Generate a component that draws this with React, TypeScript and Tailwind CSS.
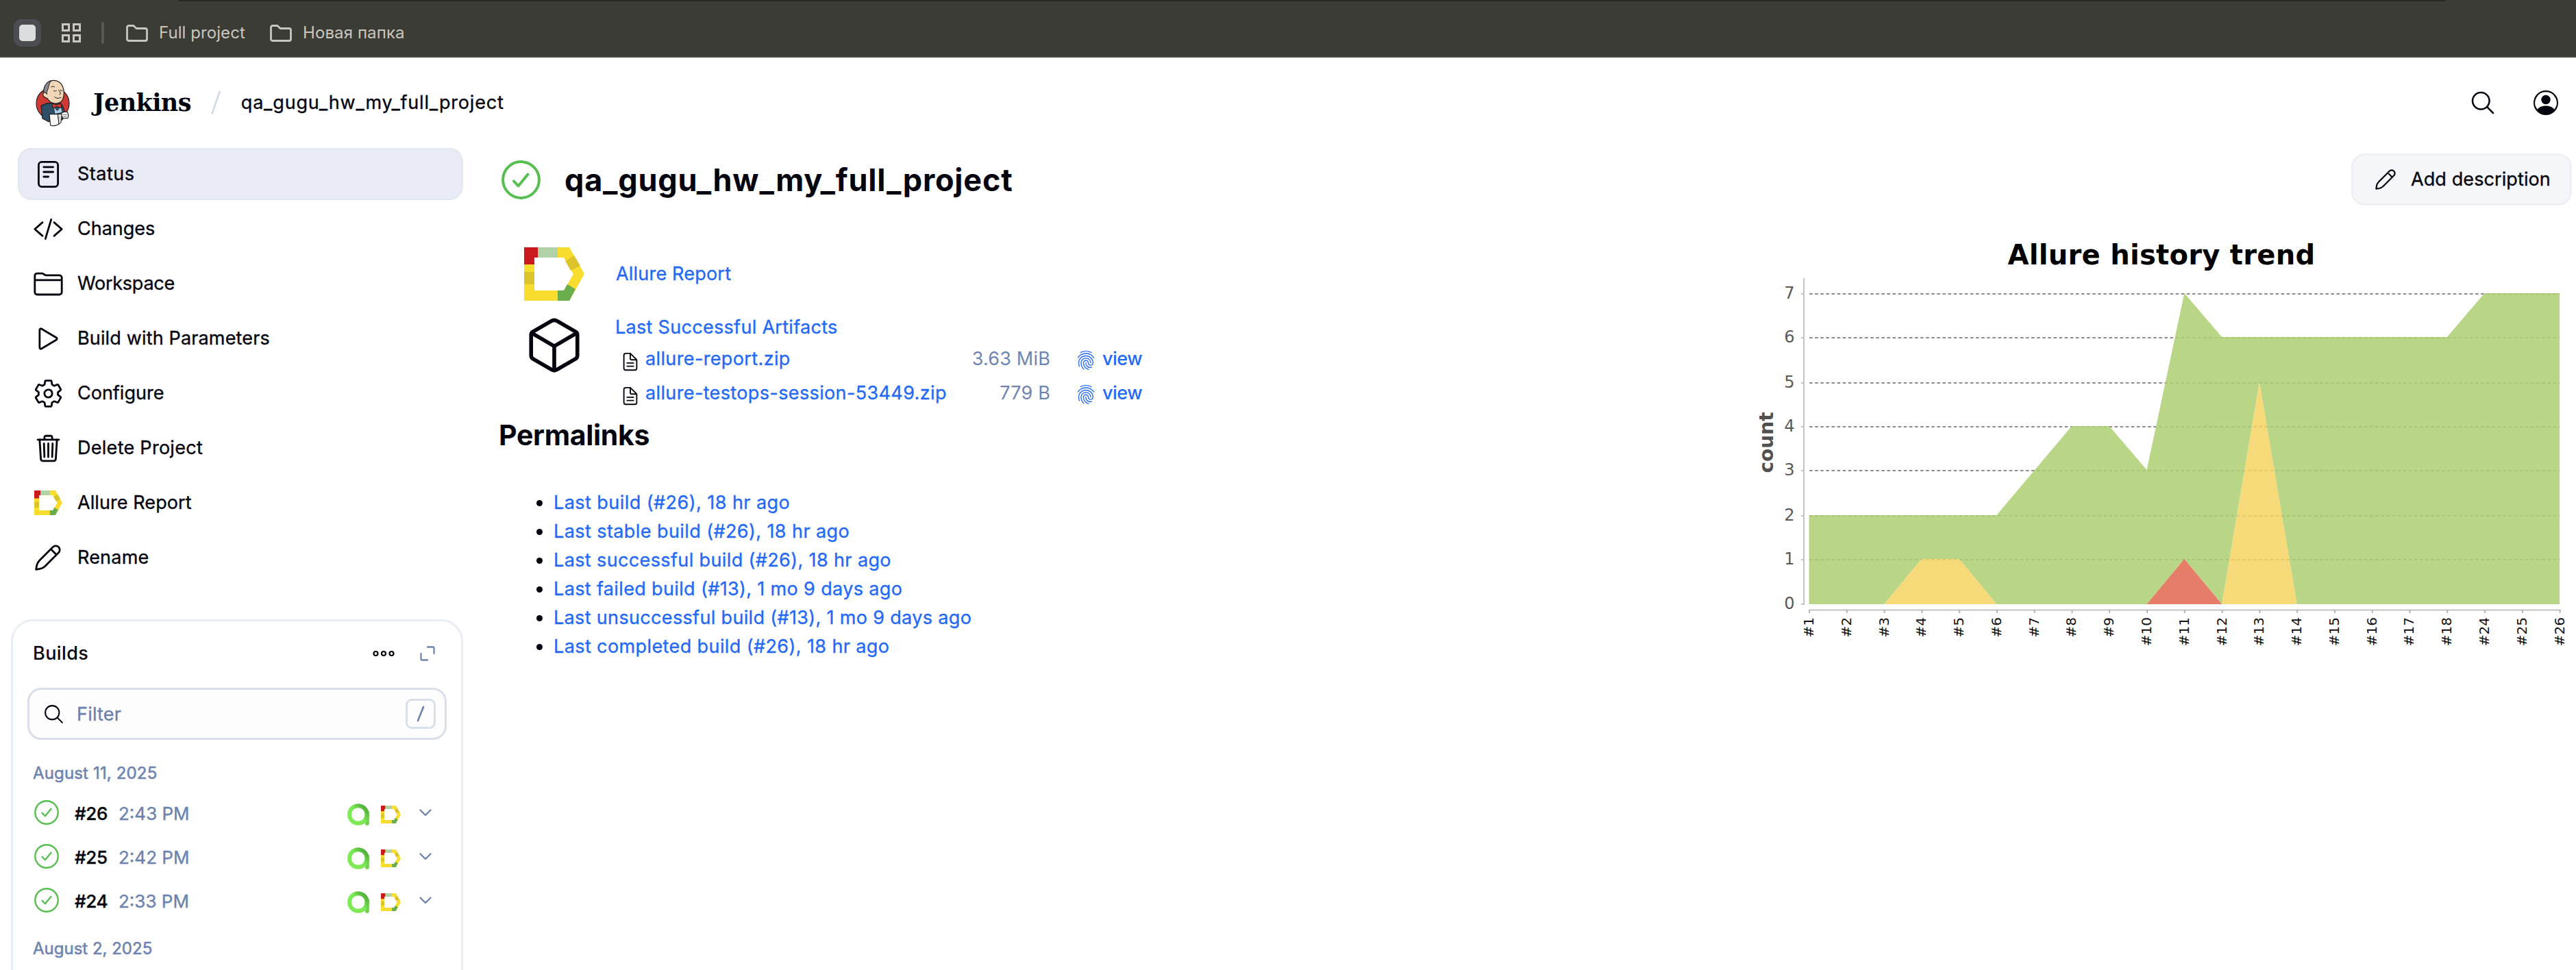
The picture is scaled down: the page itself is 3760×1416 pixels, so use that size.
import type { ReactNode } from "react";
import {
  IoCodeSlashOutline,
  IoCubeOutline,
  IoDocumentTextOutline,
  IoFingerPrintOutline,
  IoFolderOutline,
  IoPlayOutline,
  IoSearchOutline,
  IoSettingsOutline,
  IoTrashOutline,
} from "react-icons/io5";
import { BsPersonCircle } from "react-icons/bs";

function AllureLogo({ className }: { className: string }) {
  return (
    <svg viewBox="0 0 88 78" className={className} preserveAspectRatio="none">
      <path d="M0 0H66L88 39L66 78H0ZM15 15V63H58L72 39L58 15Z" fill="#f9dd2e" fillRule="evenodd" />
      <path d="M0 0H20V15H15V25H0Z" fill="#cb1a1e" />
      <path d="M20 0H49V15H20Z" fill="#b1d1a8" />
      <path d="M73 12L82 27L68 34L60 20Z" fill="#dbc32b" />
      <path d="M0 36H15V54H0Z" fill="#dbc32b" />
      <path d="M63 54L75 61L66 78H49V63H58Z" fill="#69ad4c" />
    </svg>
  );
}

function QaLogo() {
  return (
    <svg viewBox="0 0 32 32" className="mt-[6px] size-8">
      <defs>
        <linearGradient id="ring" x1="0" y1="1" x2="1" y2="0.1">
          <stop offset="0.55" stopColor="#7ce955" />
          <stop offset="1" stopColor="#4aa836" />
        </linearGradient>
      </defs>
      <path d="M28.8 13V29" stroke="#6ed24b" strokeWidth="6" strokeLinecap="round" />
      <circle cx="15.8" cy="16" r="12.8" fill="none" stroke="url(#ring)" strokeWidth="6" />
    </svg>
  );
}

function Pencil({ className }: { className: string }) {
  return (
    <svg viewBox="0 0 30 30" className={className} fill="none" stroke="currentColor" strokeWidth="2.2" strokeLinejoin="round">
      <path d="M1.3 28.7L2 24.3Q2.7 20.8 5 18.5L20.7 2.8A4.4 4.4 0 0 1 27.2 9.3L11.5 25Q9.2 27.3 5.7 28ZM18.3 5.2L24.8 11.7" />
    </svg>
  );
}

function StatusIcon() {
  return (
    <svg viewBox="0 0 31 39" className="h-[39px] w-[31px]" fill="none" stroke="currentColor" strokeWidth="2.8" strokeLinecap="round">
      <rect x="1.4" y="1.4" width="28.2" height="36.2" rx="4.5" />
      <path d="M8.8 8.8H22.6M8.8 16H22.6M8.8 23H15.6" />
    </svg>
  );
}

function Mascot() {
  return (
    <svg viewBox="67 45 150 207" className="h-[69px] w-[50px]" stroke="#231f20" strokeWidth="3.6" strokeLinejoin="round" strokeLinecap="round">
      <ellipse cx="142" cy="150" rx="72" ry="70" fill="#cf3a35" />
      <path d="M91 160L118 149L178 150L190 172L194 190L184 222L124 230L97 216Z" fill="#2f4f66" />
      <path d="M146 164L162 182L178 162L184 190L152 196Z" fill="#a9cfe6" strokeWidth="2" />
      <path d="M104 100C100 76 116 54 138 50C160 46 180 58 187 80C192 96 192 112 188 126C184 142 170 150 156 150C140 151 126 142 118 128C106 126 96 116 100 106Z" fill="#efd7b8" />
      <path d="M103 102C100 76 114 56 136 50C128 58 124 72 122 84L116 100L117 110C112 102 106 102 103 102Z" fill="#8a8a8c" strokeWidth="3" />
      <path d="M135 78Q142 70 150 78M146 94Q152 99 158 95M174 91Q178 96 184 94M168 92Q182 108 172 112M150 122Q162 132 178 124" fill="none" strokeWidth="3" />
      <path d="M140 150L157 156L178 150L180 170L160 164L142 170Z" fill="#d33833" strokeWidth="3" />
      <path d="M180 192Q194 184 206 188Q214 200 208 214L188 216Q178 206 180 192Z" fill="#fff" />
      <path d="M188 200H204M188 208H202" strokeWidth="2" />
      <path d="M127 197H165L170 240Q150 252 132 246Z" fill="#f7f7f7" />
      <path d="M165 197L182 196L178 234L170 240Z" fill="#dcd9d8" strokeWidth="3" />
    </svg>
  );
}

function BookmarkFolder() {
  return (
    <svg viewBox="0 0 32 25" className="h-[25px] w-8" fill="none" stroke="#c9c6bf" strokeWidth="2.8" strokeLinejoin="round">
      <path d="M1.5 21V4Q1.5 1.5 4 1.5H11L15 5.5H28Q30.5 5.5 30.5 8V21Q30.5 23.5 28 23.5H4Q1.5 23.5 1.5 21Z" />
    </svg>
  );
}

const icon = "size-[45px]";

const menu: { label: string; node: ReactNode; tracking: string }[] = [
  { label: "Status", node: <StatusIcon />, tracking: "tracking-[0.5px]" },
  { label: "Changes", node: <IoCodeSlashOutline className={icon} />, tracking: "tracking-[0px]" },
  { label: "Workspace", node: <IoFolderOutline className={icon} />, tracking: "tracking-[-0.25px]" },
  { label: "Build with Parameters", node: <IoPlayOutline className={icon} />, tracking: "tracking-[0.15px]" },
  { label: "Configure", node: <IoSettingsOutline className={icon} />, tracking: "tracking-[0px]" },
  { label: "Delete Project", node: <IoTrashOutline className={icon} />, tracking: "tracking-[0.28px]" },
  { label: "Allure Report", node: <AllureLogo className="h-9 w-[41px]" />, tracking: "tracking-[0.08px]" },
  { label: "Rename", node: <Pencil className="size-[38px]" />, tracking: "tracking-[0.2px]" },
];

const builds = [
  { id: "#26", time: "2:43 PM" },
  { id: "#25", time: "2:42 PM" },
  { id: "#24", time: "2:33 PM" },
];

const artifacts = [
  { name: "allure-report.zip", size: "3.63 MiB" },
  { name: "allure-testops-session-53449.zip", size: "779 B" },
];

const permalinks = [
  { text: "Last build (#26), 18 hr ago", tracking: "tracking-[0.45px]" },
  { text: "Last stable build (#26), 18 hr ago", tracking: "tracking-[0.42px]" },
  { text: "Last successful build (#26), 18 hr ago", tracking: "tracking-[0.38px]" },
  { text: "Last failed build (#13), 1 mo 9 days ago", tracking: "tracking-[0.36px]" },
  { text: "Last unsuccessful build (#13), 1 mo 9 days ago", tracking: "tracking-[0.34px]" },
  { text: "Last completed build (#26), 18 hr ago", tracking: "tracking-[0.4px]" },
];

const ticks = ["#1", "#2", "#3", "#4", "#5", "#6", "#7", "#8", "#9", "#10", "#11", "#12", "#13", "#14", "#15", "#16", "#17", "#18", "#24", "#25", "#26"];
const gridY = [882, 817, 753, 687, 623, 559, 493, 429];

function TrendChart() {
  const x = (i: number) => 2640.5 + i * 54.78;
  const pt = ([i, v]: number[]) => `${x(i).toFixed(1)},${gridY[v] - (v ? 1 : 0)}`;
  const area = (points: number[][]) => points.map(pt).join(" ");
  return (
    <svg viewBox="2540 320 1220 640" className="h-[640px] w-[1220px] font-['DejaVu_Sans'] [-webkit-text-stroke:0]">
      <text x="3155" y="386" textAnchor="middle" fontSize="40" fontWeight="700" letterSpacing="0.29" fill="#000">
        Allure history trend
      </text>
      <text transform="translate(2588 646) rotate(-90)" textAnchor="middle" fontSize="28" fontWeight="700" fill="#505050">
        count
      </text>
      {gridY.map((y, v) => (
        <g key={v}>
          {v > 0 && <path d={`M2641 ${y}H3736`} stroke="#8c8c8c" strokeWidth="2" strokeDasharray="4.6 3.5" />}
          <path d={`M2629 ${y}H2634`} stroke="#c4c4c4" strokeWidth="2" />
          <text x="2619.5" y={y + 7} textAnchor="end" fontSize="24" fill="#595959">
            {v}
          </text>
        </g>
      ))}
      <polygon
        fill="#abcf70"
        fillOpacity="0.85"
        points={area([
          [0, 0], [0, 2], [5, 2], [7, 4], [8, 4], [9, 3], [10, 7], [11, 6], [17, 6], [18, 7], [20, 7], [20, 0],
          [13, 0], [12, 5], [11, 0], [10, 1], [9, 0], [5, 0], [4, 1], [3, 1], [2, 0],
        ])}
      />
      <polygon fill="#f5d363" fillOpacity="0.85" points={area([[2, 0], [3, 1], [4, 1], [5, 0]])} />
      <polygon fill="#f5d363" fillOpacity="0.85" points={area([[11, 0], [12, 5], [13, 0]])} />
      <polygon fill="#e2664e" fillOpacity="0.85" points={area([[9, 0], [10, 1], [11, 0]])} />
      <path d="M2633 406V883M2641 890.5H3738" stroke="#c4c4c4" strokeWidth="2" fill="none" />
      {ticks.map((t, i) => (
        <g key={t}>
          <path d={`M${x(i) + 0.5} 890V895`} stroke="#b4b4b4" strokeWidth="2" />
          <text transform={`translate(${x(i) + 6.5} 901) rotate(-90)`} textAnchor="end" fontSize="20" fill="#111">
            {t}
          </text>
        </g>
      ))}
    </svg>
  );
}

export default function App() {
  return (
    <div className="flex h-[1416px] w-[3760px] flex-col overflow-hidden bg-white font-[Inter,sans-serif] text-[27px] font-normal text-[#04040f] [-webkit-text-stroke:0.35px]">
      {/* Bookmarks bar */}
      <div className="flex h-[84px] shrink-0 flex-col border-b-2 border-[#4a4a48] bg-[#3b3c36]">
        <div className="ml-[260px] h-[2px] w-[3310px] shrink-0 rounded-b bg-[#262822]" />
        <div className="flex h-20 items-center pt-3 pl-5 text-[24px] text-[#c9c6bf] [-webkit-text-stroke:0]">
          <div className="flex size-10 items-center justify-center rounded-[11px] bg-[#4c4d50]">
            <div className="size-6 rounded-[5px] bg-[#dcdde1]" />
          </div>
          <div className="ml-[30px] grid grid-cols-2 gap-1">
            <div className="size-3 border-3 border-[#c9c6bf]" />
            <div className="size-3 border-3 border-[#c9c6bf]" />
            <div className="size-3 border-3 border-[#c9c6bf]" />
            <div className="size-3 border-3 border-[#c9c6bf]" />
          </div>
          <div className="mr-8 ml-[30px] h-8 w-1 rounded bg-[#585953]" />
          <BookmarkFolder />
          <span className="ml-4 w-[162px] tracking-[0.07px]">Full project</span>
          <BookmarkFolder />
          <span className="ml-4 tracking-[0.1px]">Новая папка</span>
        </div>
      </div>

      {/* Page header */}
      <header className="flex h-[132px] shrink-0 items-center pr-[26px] pl-[52px]">
        <Mascot />
        <span className="ml-[34px] font-['DejaVu_Serif'] text-[35px] font-bold tracking-[-0.6px] [-webkit-text-stroke:0]">Jenkins</span>
        <svg viewBox="0 0 14 36" className="ml-[29px] h-9 w-[14px]">
          <path d="M12.5 2L1.5 34" stroke="#d0d9e8" strokeWidth="2.6" strokeLinecap="round" />
        </svg>
        <span className="ml-[30px] pt-px tracking-[0.82px]">qa_gugu_hw_my_full_project</span>
        <IoSearchOutline className="ml-auto size-10" />
        <BsPersonCircle className="ml-[54px] size-9" />
      </header>

      <div className="flex">
        {/* Sidebar */}
        <aside className="flex w-[676px] shrink-0 flex-col">
          <nav className="flex flex-col gap-1 pl-[26px]">
            {menu.map((m, i) => (
              <a
                key={m.label}
                className={`flex h-[76px] items-center rounded-[20px] border-2 pl-[19px] ${i === 0 ? "border-[#e3e7f0] bg-[#e8ebf4]" : "border-transparent"}`}
              >
                <span className="flex w-[46px] justify-center">{m.node}</span>
                <span className={`ml-5 pt-px ${m.tracking}`}>{m.label}</span>
              </a>
            ))}
          </nav>

          <section className="mt-[52px] ml-4 h-[540px] rounded-[32px] border-3 border-[#e9edf4] px-[21px]">
            <div className="flex h-[93px] items-center pr-[17px] pl-2">
              <span className="pt-[2px] font-medium tracking-[0.4px] [-webkit-text-stroke:0]">Builds</span>
              <svg viewBox="0 0 32 10" className="ml-auto h-[10px] w-8" fill="none" stroke="currentColor" strokeWidth="2.2">
                <circle cx="4.5" cy="5" r="3" />
                <circle cx="16" cy="5" r="3" />
                <circle cx="27.5" cy="5" r="3" />
              </svg>
              <svg viewBox="0 0 22 22" className="ml-[37px] size-[22px]" fill="none" stroke="#6f84b0" strokeWidth="2.3" strokeLinecap="round" strokeLinejoin="round">
                <path d="M11 1.5H19Q20.5 1.5 20.5 3V11M1.5 11V19Q1.5 20.5 3 20.5H11" />
              </svg>
            </div>
            <div className="mt-1 flex h-[76px] items-center rounded-[20px] border-3 border-[#d9deea] bg-[#fdfdfe] pr-[13px] pl-[19px]">
              <IoSearchOutline className="size-[33px]" />
              <span className="ml-[17px] pt-[2px] tracking-[0.2px] text-[#6b82ae]">Filter</span>
              <div className="ml-auto flex h-11 w-11 items-center justify-center rounded-[9px] border-3 border-[#d8e0ea]">
                <svg viewBox="0 0 12 24" className="h-6 w-3">
                  <path d="M10 2L2 22" stroke="#6b82ae" strokeWidth="2.6" strokeLinecap="round" />
                </svg>
              </div>
            </div>
            <div className="mt-[23px] flex h-[51px] items-center pl-2 text-[24px] tracking-[0.15px] text-[#6f84b0] [-webkit-text-stroke:0.6px]">August 11, 2025</div>
            {builds.map((b) => (
              <div key={b.id} className="flex h-16 items-center pr-[22px] pl-[10px] text-[26px]">
                <svg viewBox="0 0 36 36" className="size-9" fill="none" stroke="#57bf50" strokeWidth="2.4" strokeLinecap="round" strokeLinejoin="round">
                  <circle cx="18" cy="18" r="16.7" />
                  <path d="M11.6 18.8L15.8 23.3L24.6 12.8" />
                </svg>
                <span className="mt-[3px] ml-[23px] w-[64px] font-medium tracking-[-0.3px]">{b.id}</span>
                <span className="mt-[3px] text-[#6b82ae]">{b.time}</span>
                <span className="ml-auto">
                  <QaLogo />
                </span>
                <AllureLogo className="mt-[6px] ml-[17px] h-[26px] w-[29px]" />
                <svg viewBox="0 0 18 11" className="ml-[27px] h-[11px] w-[18px]" fill="none" stroke="#6b82ae" strokeWidth="2.3" strokeLinecap="round" strokeLinejoin="round">
                  <path d="M1.5 1.5L9 9L16.5 1.5" />
                </svg>
              </div>
            ))}
            <div className="mt-[13px] flex h-[52px] items-center pl-2 text-[24px] tracking-[0px] text-[#6f84b0] [-webkit-text-stroke:0.6px]">August 2, 2025</div>
          </section>
        </aside>

        {/* Main panel */}
        <main className="ml-[52px] flex flex-1 flex-col">
          <div className="flex h-[92px] items-center pr-[6px] pl-1">
            <svg viewBox="0 0 57 57" className="size-[57px]" fill="none" stroke="#57bf50" strokeWidth="4" strokeLinecap="round" strokeLinejoin="round">
              <circle cx="28.5" cy="28.5" r="26.4" />
              <path d="M18 30.5L24.5 37.5L38.5 20.5" />
            </svg>
            <h1 className="ml-[35px] text-[45px] leading-none font-[650] tracking-[0.79px] [-webkit-text-stroke:0]">qa_gugu_hw_my_full_project</h1>
            <button className="ml-auto flex h-[76px] w-[322px] items-center rounded-[20px] border-3 border-[#eef0f4] bg-[#f4f6fa] pl-8">
              <Pencil className="size-[30px]" />
              <span className="ml-[22px] pt-px tracking-[0.1px] whitespace-nowrap">Add description</span>
            </button>
          </div>

          <div className="flex justify-between">
            <div className="flex flex-col text-[#2469f5]">
              <div className="mt-[46px] flex h-[92px] items-center pl-[37px]">
                <AllureLogo className="h-[78px] w-[88px]" />
                <span className="ml-[46px] pt-px tracking-[0.2px]">Allure Report</span>
              </div>
              <div className="mt-[10px] flex pl-9">
                <IoCubeOutline className="mt-[3px] size-[90px] text-[#04040f]" />
                <div className="ml-[44px] flex flex-col">
                  <span className="leading-[43px] tracking-[0.3px]">Last Successful Artifacts</span>
                  {artifacts.map((a) => (
                    <div key={a.name} className="flex h-[50px] items-center pl-[7px]">
                      <IoDocumentTextOutline className="mt-[8px] size-[30px] text-[#04040f]" />
                      <span className="ml-[7px] w-[458px] tracking-[0.37px]">{a.name}</span>
                      <span className="w-[133px] text-right tracking-[0.2px] text-[#6f84b0] [-webkit-text-stroke:0]">{a.size}</span>
                      <IoFingerPrintOutline className="mt-[4px] ml-[37px] size-[30px]" />
                      <span className="ml-[9px] font-medium tracking-[-0.5px] [-webkit-text-stroke:0]">view</span>
                    </div>
                  ))}
                </div>
              </div>
              <h2 className="mt-[6px] text-[41px] leading-[60px] font-[650] tracking-[-0.33px] text-[#04040f] [-webkit-text-stroke:0]">Permalinks</h2>
              <ul className="mt-[48px] pl-[55px]">
                {permalinks.map((p) => (
                  <li key={p.text} className="flex h-[42px] items-center">
                    <span className="size-[9px] rounded-full bg-[#04040f]" />
                    <span className={`ml-4 ${p.tracking}`}>{p.text}</span>
                  </li>
                ))}
              </ul>
            </div>
            <div className="mt-3">
              <TrendChart />
            </div>
          </div>
        </main>
      </div>
    </div>
  );
}
